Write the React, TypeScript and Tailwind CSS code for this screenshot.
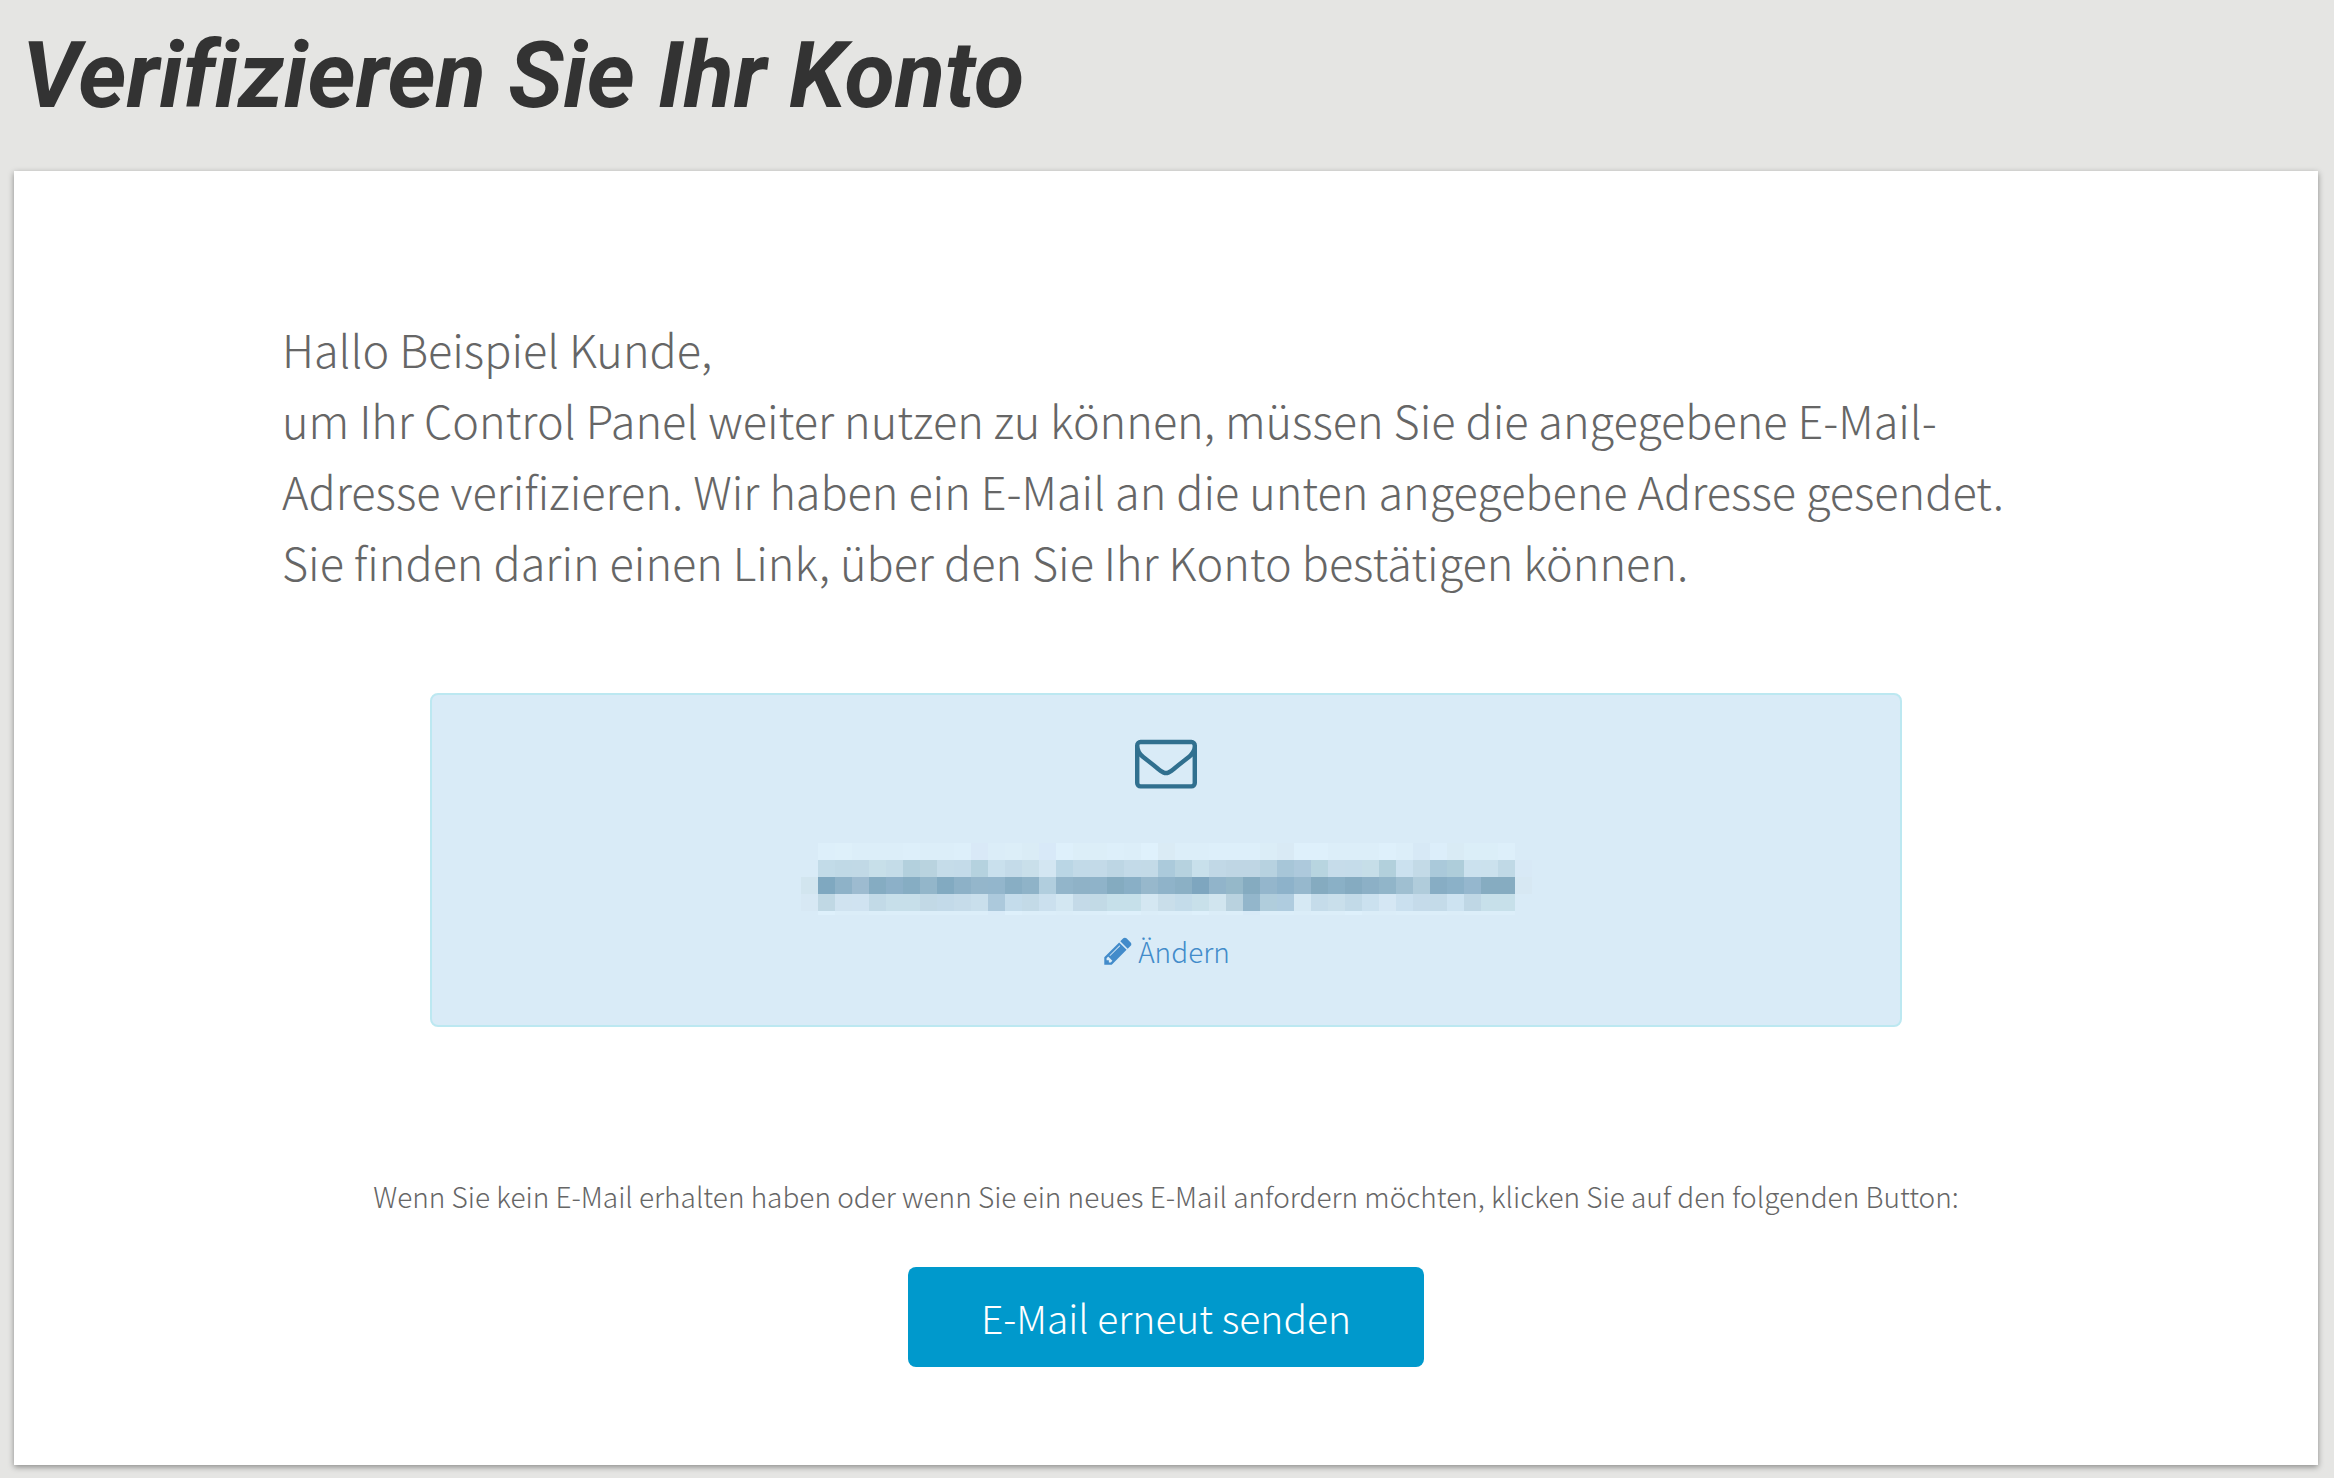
import React from "react";

const CELL = 17;

// Colours of the obscured address, row by row.
const MASK_ROWS: { y: number; start: number; height: number; colors: string }[] = [
  { y: 0, start: 1, height: 17, colors: "ddeffa def0fa dceef9 dceef9 dceef9 ddeffa dceef9 dceef9 ddeffa d9e9f7 dbedf8 dceef8 daecf6 d8e9f8 def0fb dceef8 dceef8 ddeffa dceef9 dff1fc daebf5 dceef9 dceef9 ddeffa ddeffa ddeffa dbedf7 d9eaf5 def0fb def0fb dceef9 dceef9 dceef9 def0fb dceef9 d7e9f6 dceefa d9ebf5 dbeef8 dbeef8 ddeffa" },
  { y: 17, start: 1, height: 17, colors: "c2dbe8 c0d9e6 c1d9e6 c7dfe9 c4dce8 b3d0dd b9d3df c5dce9 c4dbe9 b5d2df c9e0ed c4dbe9 c9dfea d3e6f2 bad6e5 c2dae8 c3dae8 bdd6e4 c3dae8 c3dae7 abcadb b6d2df c8e0eb c1d8e6 bfd6e4 bfd6e4 b7d2e0 a7c6d8 adc9dc b8d5e0 c6dcea c5dcea c6dee8 b2d0dc cbe1ef c3dae7 aac9da aecdda cbe1ee cbe1ed c0d9e6 d8e9f6" },
  { y: 34, start: 0, height: 17, colors: "d2e5ef 7fa8c0 8eb2c8 9dbbd0 85acc2 8cb0c8 86adc3 93b6ca 82aac1 8db1c7 94b6cb 93b6cc 88aec4 8fb3c8 b1cede 92b5ca 8fb2c7 8fb3c9 84abc0 89afc6 97b8cc 8fb3c9 8bb0c5 7ea6bf 91b4ca 95b8c9 85abc0 94b6cc 8db2ca 96b8cd 85abc0 8ab0c6 85abc1 8cb0c6 91b5c9 9fbfd1 b0ccdb 87adc4 8bb1c8 95b7ce 86acc1 86acc1 d7e8f3" },
  { y: 51, start: 0, height: 17, colors: "d7e8f4 c0d8e4 d0e3f0 d0e3f1 c2dae7 c7dfea c7dfea c2d9e6 c3dae9 c6dcea c9dfec acc9dc c4dceb c3dae7 cbe0ee d3e7f2 c4dae8 c2dae6 c6e0ea c6e0ea d4e7f2 c9deea c4dcea c8e0ea d1e5ef b9d2df 93b6cb b0cddc afccdf d6e9f4 c5dcea c9dfeb c2dae8 cbe1ef d5e7f4 cae0ef c5dbea c4dbe9 cde3f1 bfd7e5 c7e0ea c7e0ea" },
  { y: 68, start: 1, height: 4, colors: "def0fb dbedf8 dbedf8 dceef9 dceef9 dceef9 dceef9 dceef9 dceef9 dceef9 d9ebf8 def0fb dceef9 dceef9 dbedf8 dceef9 dceef9 def0fb def0fb dbedf8 dceef9 dceef9 def0fb dbedf8 dceef9 d8eaf7 dceef9 dceef9 dbedf8 dceef9 dceef9 def0fb dbedf8 dbedf8 dceef9 dceef9 dceef9 dbedf8 dceef9 dceef9 dceef9" },
];

function MaskedAddress() {
  return (
    <svg
      role="img"
      aria-label="Unkenntlich gemachte E-Mail-Adresse"
      viewBox="0 0 731 72"
      width={731}
      height={72}
      shapeRendering="crispEdges"
      className="max-w-full"
    >
      {MASK_ROWS.map((row) =>
        row.colors.split(" ").map((color, i) => (
          <rect
            key={`${row.y}-${i}`}
            x={(row.start + i) * CELL}
            y={row.y}
            width={CELL}
            height={row.height}
            fill={`#${color}`}
          />
        )),
      )}
    </svg>
  );
}

function EnvelopeIcon() {
  return (
    <svg viewBox="0 0 1792 1792" className="size-[62px] fill-current" aria-hidden="true">
      <path d="M1664 1504V736q-32 36-69 66-268 206-426 338-51 43-83 67t-86.500 48.500T897 1280h-2q-48 0-102.500-24.500T706 1207t-83-67Q465 1008 197 802q-37-30-69-66v768q0 13 9.500 22.500T160 1536h1472q13 0 22.500-9.500t9.500-22.500zm0-1051v-24.500l-.5-13-3-12.500-5.500-9-9-7.500-14-2.500H160q-13 0-22.500 9.500T128 416q0 168 147 284 193 152 401 317 6 5 35 29.500t46 37.500 44.500 31.500T852 1143t43 9h2q20 0 43-9t50.500-27.500T1035 1084t46-37.500 35-29.500q208-165 401-317 54-43 100.500-115.500T1664 453zm128-37v1088q0 66-47 113t-113 47H160q-66 0-113-47T0 1504V416q0-66 47-113t113-47h1472q66 0 113 47t47 113z" />
    </svg>
  );
}

function PencilIcon() {
  return (
    <svg viewBox="0 0 1792 1792" className="size-8 fill-current" aria-hidden="true">
      <path d="M491 1536l91-91-235-235-91 91v107h128v128h107zm523-928q0-22-22-22-10 0-17 7L433 1135q-7 7-7 17 0 22 22 22 10 0 17-7l542-542q7-7 7-17zm-54-192l416 416-832 832H128v-416zm683 96q0 53-37 90l-166 166-416-416 166-165q36-38 90-38 53 0 91 38l235 234q37 39 37 91z" />
    </svg>
  );
}

export default function App() {
  return (
    <div className="min-h-screen bg-[#e5e5e3] pt-5 pr-4 pb-3 pl-[14px] font-['Noto_Sans_CJK_SC',sans-serif] font-light text-[#666]">
      <h1 className="pl-2 font-['Roboto',sans-serif] text-[92px] leading-[112px] font-bold text-[#333] italic [font-variant-ligatures:none]">
        Verifizieren Sie Ihr Konto
      </h1>
      <main className="mt-[39px] flex flex-col items-center bg-white px-8 pt-[142px] pb-[98px] shadow-[0_2px_6px_rgba(0,0,0,0.4)]">
        <p className="w-full max-w-[1768px] text-[45px] leading-[71px]">
          Hallo Beispiel Kunde,
          <br />
          um Ihr Control Panel weiter nutzen zu können, müssen Sie die angegebene E-Mail-Adresse
          verifizieren. Wir haben ein E-Mail an die unten angegebene Adresse gesendet. Sie finden
          darin einen Link, über den Sie Ihr Konto bestätigen können.
        </p>
        <section className="mt-24 flex w-full max-w-[1472px] flex-col items-center rounded-lg border-2 border-[#bce8f1] bg-[#d9ebf7] pt-9 pb-[51px] text-[#31708f]">
          <EnvelopeIcon />
          <div className="mt-[50px] flex">
            <MaskedAddress />
          </div>
          <a href="#aendern" className="mt-[13px] flex items-center gap-1 text-[28px] leading-[46px] text-[#428bca]">
            <PencilIcon />
            Ändern
          </a>
        </section>
        <p className="mt-[146px] text-center text-[28px] leading-[46px]">
          Wenn Sie kein E-Mail erhalten haben oder wenn Sie ein neues E-Mail anfordern möchten,
          klicken Sie auf den folgenden Button:
        </p>
        <button
          type="button"
          className="mt-12 h-[100px] rounded-lg bg-[#0099cc] px-[73px] text-[39px] leading-none text-white"
        >
          E-Mail erneut senden
        </button>
      </main>
    </div>
  );
}
